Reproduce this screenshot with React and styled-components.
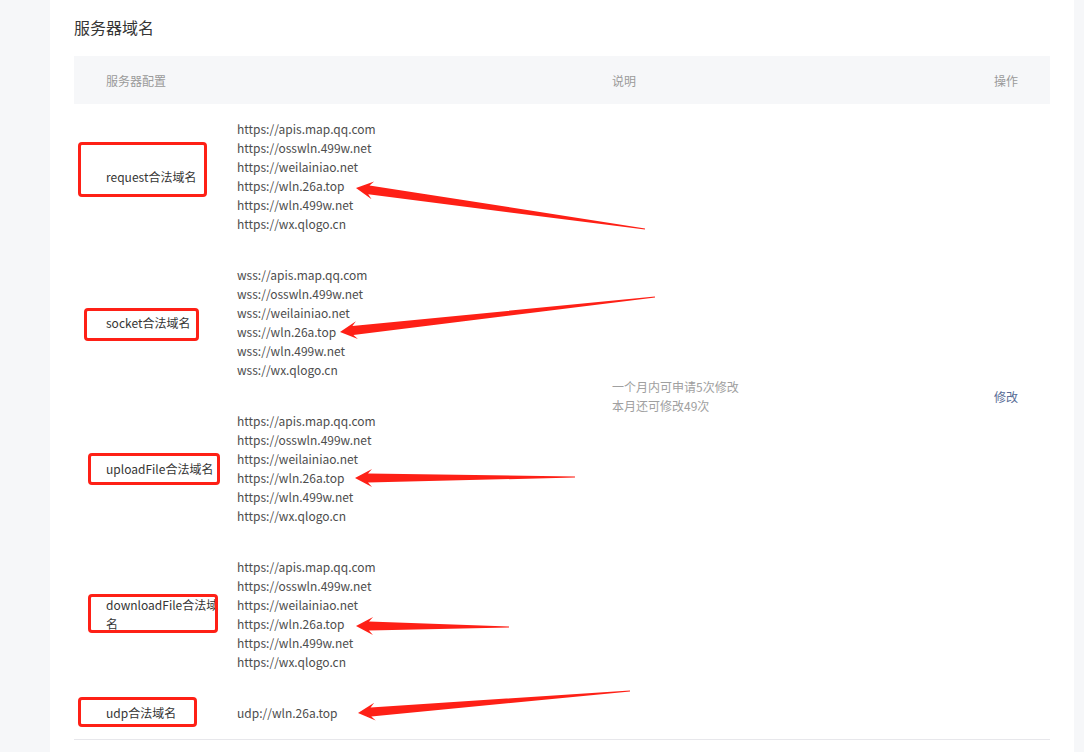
import React from "react";
import styled, { createGlobalStyle } from "styled-components";

const GlobalStyle = createGlobalStyle`
  html, body {
    margin: 0;
    padding: 0;
    background: #f6f7f9;
  }
  body {
    font-family: "Noto Sans CJK SC", "Noto Sans", sans-serif;
  }
`;

const Page = styled.div`
  position: relative;
  width: 1084px;
  height: 752px;
  overflow: hidden;
`;

const Panel = styled.div`
  margin-left: 50px;
  width: 1024px;
  min-height: 752px;
  box-sizing: border-box;
  padding: 15px 24px 0 24px;
  background: #fff;
`;

const Title = styled.h2`
  margin: 0 0 17px 0;
  font-size: 16px;
  font-weight: 400;
  line-height: 24px;
  color: #353535;
`;

const columns = "163px 375px 1fr 56px";

const Head = styled.div`
  display: grid;
  grid-template-columns: ${columns};
  height: 48px;
  align-items: center;
  background: #f6f7f9;
  font-size: 12px;
  color: #9a9a9a;
`;

const HeadCell = styled.div`
  grid-column: ${(p) => p.$span || "auto"};
  padding-left: ${(p) => p.$pad || 0}px;
`;

const Body = styled.div`
  display: grid;
  grid-template-columns: ${columns};
  border-bottom: 1px solid #e7e7eb;
  font-size: 12px;
  line-height: 19px;
`;

const Label = styled.div`
  grid-column: 1;
  display: flex;
  align-items: center;
  padding: 15px 14px 17px 32px;
  color: #353535;
  word-break: break-all;
`;

const Urls = styled.div`
  grid-column: 2;
  padding: 15px 0 17px 0;
  color: #4d4d4d;
  display: flex;
  flex-direction: column;
  justify-content: center;
`;

const Desc = styled.div`
  grid-column: 3;
  grid-row: 1 / span 4;
  align-self: center;
  color: #a0a0a0;
`;

const Action = styled.a`
  grid-column: 4;
  grid-row: 1 / span 4;
  align-self: center;
  color: #576b95;
  text-decoration: none;
  cursor: pointer;
`;

const Overlay = styled.svg`
  position: absolute;
  left: 0;
  top: 0;
  pointer-events: none;
`;

const hosts = [
  "apis.map.qq.com",
  "osswln.499w.net",
  "weilainiao.net",
  "wln.26a.top",
  "wln.499w.net",
  "wx.qlogo.cn",
];

const rows = [
  { label: "request合法域名", urls: hosts.map((h) => "https://" + h) },
  { label: "socket合法域名", urls: hosts.map((h) => "wss://" + h) },
  { label: "uploadFile合法域名", urls: hosts.map((h) => "https://" + h) },
  { label: "downloadFile合法域名", urls: hosts.map((h) => "https://" + h) },
  { label: "udp合法域名", urls: ["udp://wln.26a.top"] },
];

// annotation marks drawn on top of the screenshot
const boxes = [
  [78, 142, 207, 197],
  [84, 308, 199, 341],
  [88, 453, 220, 485],
  [88, 594, 218, 633],
  [78, 697, 197, 727],
];

const arrows = [
  [356, 188, 645, 229],
  [340, 332, 655, 297],
  [355, 478, 575, 477],
  [356, 626, 509, 627],
  [358, 713, 630, 691],
];

const arrowPoints = ([tx, ty, ex, ey]) => {
  const dx = ex - tx;
  const dy = ey - ty;
  const len = Math.hypot(dx, dy);
  const ux = dx / len;
  const uy = dy / len;
  const nx = -uy;
  const ny = ux;
  const p = (a, b) =>
    `${(tx + ux * a + nx * b).toFixed(1)},${(ty + uy * a + ny * b).toFixed(1)}`;
  return [
    p(0, 0),
    p(17, 9),
    p(13, 4.5),
    p(len, 0.6),
    p(len, -0.6),
    p(13, -4.5),
    p(17, -9),
  ].join(" ");
};

const Annotations = () => (
  <Overlay width="1084" height="752" viewBox="0 0 1084 752">
    {boxes.map(([x1, y1, x2, y2], i) => (
      <rect
        key={"b" + i}
        x={x1 + 1.5}
        y={y1 + 1.5}
        width={x2 - x1 - 3}
        height={y2 - y1 - 3}
        rx="2.5"
        fill="none"
        stroke="#fe2016"
        strokeWidth="3"
      />
    ))}
    {arrows.map((a, i) => (
      <polygon key={"a" + i} points={arrowPoints(a)} fill="#fe2016" />
    ))}
  </Overlay>
);

const App = () => {
  return (
    <Page>
      <GlobalStyle />
      <Panel>
        <Title>服务器域名</Title>
        <Head>
          <HeadCell $span="1 / 3" $pad={32}>服务器配置</HeadCell>
          <HeadCell>说明</HeadCell>
          <HeadCell>操作</HeadCell>
        </Head>
        <Body>
          {rows.map((r) => (
            <React.Fragment key={r.label}>
              <Label>{r.label}</Label>
              <Urls>
                {r.urls.map((u) => (
                  <div key={u}>{u}</div>
                ))}
              </Urls>
            </React.Fragment>
          ))}
          <Desc>
            一个月内可申请5次修改
            <br />
            本月还可修改49次
          </Desc>
          <Action>修改</Action>
        </Body>
      </Panel>
      <Annotations />
    </Page>
  );
};

export default App;
